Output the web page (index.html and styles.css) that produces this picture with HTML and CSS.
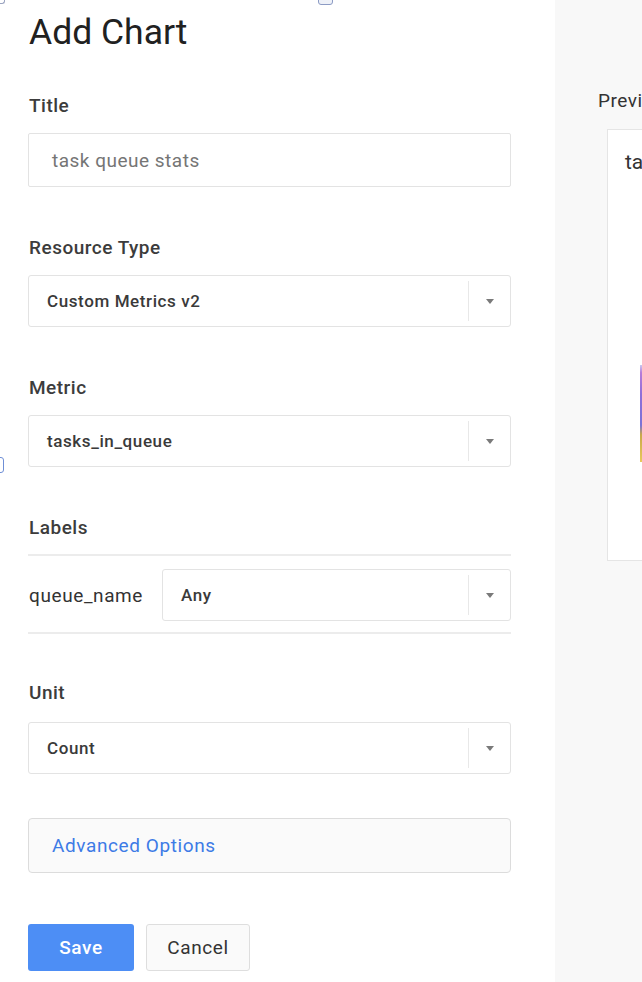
FILE: index.html
```html
<!DOCTYPE html>
<html>
<head>
<meta charset="utf-8">
<link rel="stylesheet" href="styles.css">
</head>
<body>
<div class="page">
  <span class="mark mark-tl"></span>
  <span class="mark mark-top"></span>
  <span class="mark mark-left"></span>
  <main class="editor">
    <h1 class="heading">Add Chart</h1>

    <label class="field-label">Title</label>
    <div class="text-input">task queue stats</div>

    <label class="field-label">Resource Type</label>
    <div class="select">
      <span class="select-value">Custom Metrics v2</span>
      <span class="select-arrow"><span class="tri"></span></span>
    </div>

    <label class="field-label">Metric</label>
    <div class="select">
      <span class="select-value">tasks_in_queue</span>
      <span class="select-arrow"><span class="tri"></span></span>
    </div>

    <label class="field-label">Labels</label>
    <div class="labels-row">
      <span class="label-key">queue_name</span>
      <div class="select select-grow">
        <span class="select-value">Any</span>
        <span class="select-arrow"><span class="tri"></span></span>
      </div>
    </div>

    <label class="field-label field-label-after-row">Unit</label>
    <div class="select">
      <span class="select-value">Count</span>
      <span class="select-arrow"><span class="tri"></span></span>
    </div>

    <div class="advanced">Advanced Options</div>

    <div class="actions">
      <button class="btn btn-primary">Save</button>
      <button class="btn btn-secondary">Cancel</button>
    </div>
  </main>
  <aside class="preview">
    <div class="preview-title">Preview</div>
    <div class="preview-card">
      <div class="card-title">task queue stats</div>
      <div class="chart">
        <div class="bar"></div>
      </div>
    </div>
  </aside>
</div>
</body>
</html>
```

FILE: styles.css
```css
* { box-sizing: border-box; }

html, body {
  margin: 0;
  padding: 0;
  background: #ffffff;
  font-family: Roboto, "Liberation Sans", Arial, sans-serif;
  color: #212121;
}

.page {
  position: relative;
  display: flex;
  width: 642px;
  height: 982px;
  overflow: hidden;
}

.editor {
  width: 555px;
  flex: none;
  padding: 12px 44px 0 28px;
  display: flex;
  flex-direction: column;
  background: #ffffff;
}

.heading {
  margin: 0;
  padding-left: 1px;
  font-size: 35.5px;
  line-height: 40px;
  font-weight: 400;
  color: #212121;
}

.field-label {
  display: block;
  margin-top: 49px;
  margin-bottom: 15px;
  padding-left: 1px;
  font-size: 19px;
  line-height: 24px;
  font-weight: 500;
  letter-spacing: 0.5px;
  color: #3c3c3c;
}

.heading + .field-label { margin-top: 42px; }

.text-input {
  height: 54px;
  border: 1px solid #e3e3e3;
  border-radius: 2px;
  padding-left: 23px;
  display: flex;
  align-items: center;
  font-size: 19px;
  letter-spacing: 0.5px;
  color: #757575;
}

.select {
  height: 52px;
  border: 1px solid #e3e3e3;
  border-radius: 3px;
  display: flex;
  align-items: center;
  background: #ffffff;
}

.select-value {
  flex: 1;
  padding-left: 18px;
  font-size: 17px;
  font-weight: 500;
  letter-spacing: 0.6px;
  color: #3a3a3a;
}

.select-arrow {
  width: 42px;
  height: 40px;
  border-left: 1px solid #e8e8e8;
  display: flex;
  align-items: center;
  justify-content: center;
}

.tri {
  width: 0;
  height: 0;
  border-left: 4.5px solid transparent;
  border-right: 4.5px solid transparent;
  border-top: 5px solid #7a7a7a;
}

.labels-row {
  display: flex;
  align-items: center;
  gap: 16px;
  border-top: 2px solid #ececec;
  border-bottom: 2px solid #ececec;
  padding: 13px 0 11px 1px;
  margin-top: -1px;
}

.label-key {
  font-size: 19px;
  letter-spacing: 0.6px;
  color: #333333;
  width: 117px;
  flex: none;
  white-space: nowrap;
}

.select-grow { flex: 1; }

.field-label-after-row { margin-top: 47px; }

.field-label-after-row + .select { margin-top: 2px; }

.advanced {
  margin-top: 44px;
  height: 55px;
  border: 1px solid #dcdcdc;
  border-radius: 4px;
  background: #fafafa;
  display: flex;
  align-items: center;
  padding-left: 23px;
  font-size: 19px;
  letter-spacing: 0.6px;
  color: #3d7be6;
}

.actions {
  margin-top: 51px;
  display: flex;
  gap: 12px;
}

.btn {
  height: 47px;
  border-radius: 3px;
  font-family: Roboto, "Liberation Sans", Arial, sans-serif;
  font-size: 19px;
  letter-spacing: 0.6px;
  padding: 0;
  cursor: pointer;
}

.btn-primary {
  width: 106px;
  border: none;
  background: #4d8ef5;
  color: #ffffff;
  font-weight: 500;
}

.btn-secondary {
  width: 104px;
  border: 1px solid #dedede;
  background: #fafafa;
  color: #333333;
}

.preview {
  flex: 1;
  background: #f8f8f8;
  padding: 89px 0 0 43px;
  min-width: 0;
  overflow: hidden;
}

.preview-title {
  font-size: 19px;
  line-height: 24px;
  letter-spacing: 0.5px;
  color: #333333;
  white-space: nowrap;
}

.preview-card {
  margin-top: 16px;
  margin-left: 9px;
  width: 420px;
  height: 432px;
  background: #ffffff;
  border: 1px solid #e5e5e5;
  padding: 19px 0 0 17px;
}

.card-title {
  font-size: 21px;
  line-height: 26px;
  color: #333333;
  white-space: nowrap;
}

.chart {
  margin-top: 190px;
  padding-left: 15px;
}

.bar {
  width: 10px;
  height: 97px;
  background: linear-gradient(to bottom,
    #c9c9f0 0%, #b77cd8 8%, #8f6fd8 30%, #7b72d6 62%, #c9a94a 72%, #e8c95c 100%);
}

.mark {
  position: absolute;
  display: block;
}

.mark-tl {
  left: 0;
  top: 0;
  width: 5px;
  height: 4px;
  border-bottom: 1px solid #9aa4c0;
  border-right: 1px solid #9aa4c0;
  border-bottom-right-radius: 3px;
}

.mark-top {
  left: 318px;
  top: -8px;
  width: 15px;
  height: 13px;
  border: 1.5px solid #8c9bc4;
  border-radius: 3px;
  background: #eef1f8;
}

.mark-left {
  left: -6px;
  top: 457px;
  width: 10px;
  height: 16px;
  border: 1.5px solid #6f8fd6;
  border-radius: 3px;
}
```
